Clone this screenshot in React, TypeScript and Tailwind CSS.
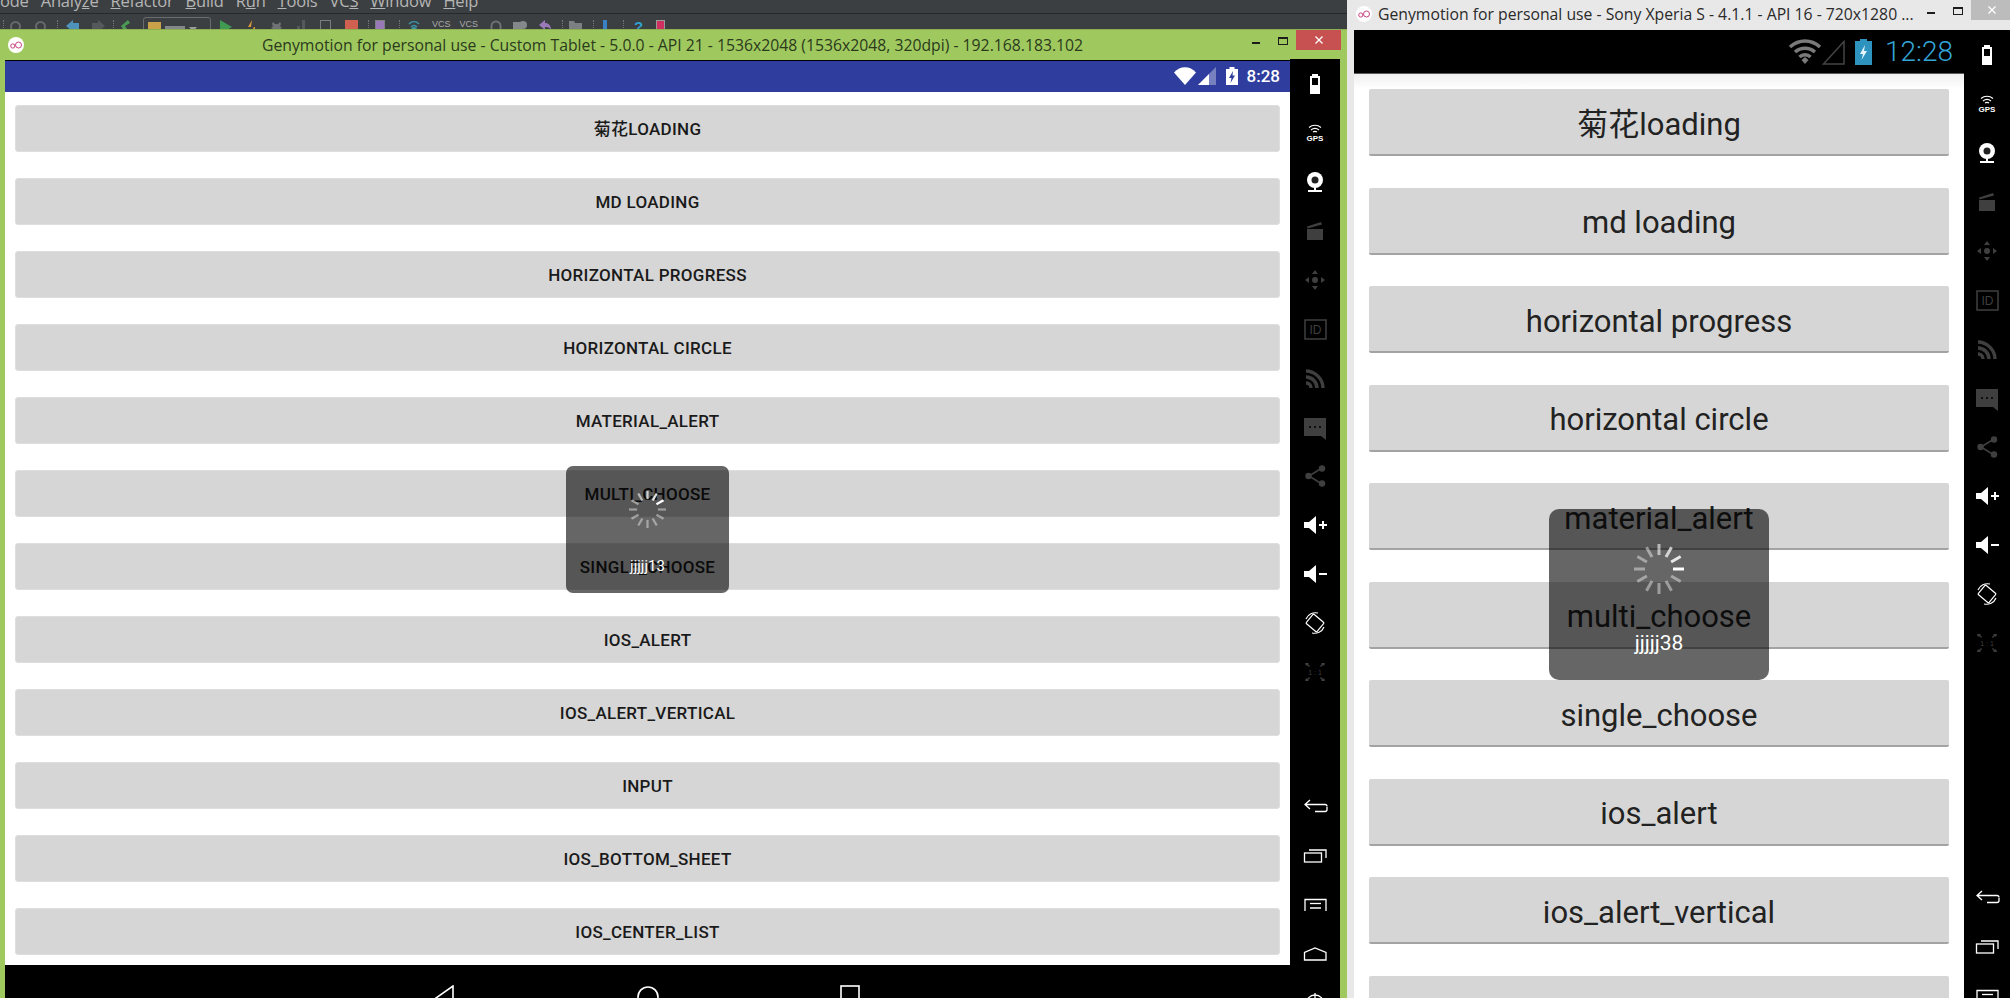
import type { ReactNode } from 'react';

const leftButtons = ['菊花LOADING', 'MD LOADING', 'HORIZONTAL PROGRESS', 'HORIZONTAL CIRCLE', 'MATERIAL_ALERT', 'MULTI_CHOOSE', 'SINGLE_CHOOSE', 'IOS_ALERT', 'IOS_ALERT_VERTICAL', 'INPUT', 'IOS_BOTTOM_SHEET', 'IOS_CENTER_LIST'];
const rightButtons = ['菊花loading', 'md loading', 'horizontal progress', 'horizontal circle', 'material_alert', 'multi_choose', 'single_choose', 'ios_alert', 'ios_alert_vertical', 'input'];

const menus: [string, string, string][] = [
  ['', '', 'ode'],
  ['Analy', 'z', 'e'],
  ['', 'R', 'efactor'],
  ['', 'B', 'uild'],
  ['R', 'u', 'n'],
  ['', 'T', 'ools'],
  ['VC', 'S', ''],
  ['', 'W', 'indow'],
  ['', 'H', 'elp'],
];

function GenyLogo() {
  return (
    <svg width="16" height="16" viewBox="0 0 16 16" className="shrink-0">
      <circle cx="8" cy="8" r="8" fill="#fff" />
      <circle cx="4.8" cy="9" r="2.1" fill="none" stroke="#c9457f" strokeWidth="1" />
      <circle cx="10.5" cy="8" r="3" fill="none" stroke="#c9457f" strokeWidth="1" />
    </svg>
  );
}

function Spinner({ size, head, width }: { size: number; head: number; width: number }) {
  const ticks = Array.from({ length: 12 }, (_, i) => i);
  return (
    <svg width={size} height={size} viewBox="-50 -50 100 100">
      {ticks.map((i) => (
        <line
          key={i}
          x1="0"
          y1="-50"
          x2="0"
          y2="-28"
          stroke="#fff"
          strokeWidth={width}
          opacity={Math.max(0.42, 1 - i * 0.14)}
          transform={`rotate(${head - i * 30})`}
        />
      ))}
    </svg>
  );
}

const dim = '#3f3f3f';

const sideIcons: ReactNode[] = [
  <svg key="battery" width="28" height="28" viewBox="0 0 28 28">
    <path d="M11 4h6v2h2v18H9V6h2z" fill="#fff" />
    <rect x="11" y="8" width="6" height="7" fill="#000" />
  </svg>,
  <svg key="gps" width="28" height="28" viewBox="0 0 28 28" fill="none" stroke="#fff">
    <path d="M8 8.5c3.500-3 8.500-3 12 0M10 11c2.500-2 5.500-2 8 0M12 13c1.200-.8 2.800-.8 4 0" strokeWidth="1.100" />
    <text x="14" y="22" textAnchor="middle" fill="#fff" stroke="none" fontSize="8" fontWeight="700" fontFamily="'Liberation Sans', sans-serif">GPS</text>
  </svg>,
  <svg key="cam" width="28" height="28" viewBox="0 0 28 28">
    <circle cx="14" cy="12" r="8" fill="#fff" />
    <circle cx="14" cy="12" r="3.500" fill="#222" />
    <rect x="7" y="22" width="14" height="2" fill="#fff" />
    <rect x="13" y="19" width="2" height="4" fill="#fff" />
  </svg>,
  <svg key="clap" width="28" height="28" viewBox="0 0 28 28" fill={dim}>
    <path d="M6 12h16v11H6z" />
    <path d="M6 9.500 20 5l1 2.500L6.500 11.500z" />
  </svg>,
  <svg key="pad" width="28" height="28" viewBox="0 0 28 28" fill={dim}>
    <circle cx="14" cy="14" r="3" />
    <path d="M14 4l3 4h-6zM14 24l3-4h-6zM4 14l4-3v6zM24 14l-4-3v6z" />
  </svg>,
  <svg key="id" width="28" height="28" viewBox="0 0 28 28">
    <rect x="4" y="5" width="21" height="19" fill="none" stroke={dim} strokeWidth="1.500" />
    <text x="14.500" y="19" textAnchor="middle" fill={dim} fontSize="12" fontFamily="'Liberation Sans', sans-serif">ID</text>
  </svg>,
  <svg key="rss" width="28" height="28" viewBox="0 0 28 28" fill="none" stroke={dim} strokeWidth="3.500">
    <path d="M5 7c9 0 17 8 17 17M5 13c6 0 11 5 11 11M5 19c3 0 5 2 5 5" />
  </svg>,
  <svg key="msg" width="28" height="28" viewBox="0 0 28 28">
    <path d="M3 5h22v22l-5-4H3z" fill={dim} />
    <circle cx="9" cy="14" r="1" fill="#000" />
    <circle cx="14" cy="14" r="1" fill="#000" />
    <circle cx="19" cy="14" r="1" fill="#000" />
  </svg>,
  <svg key="share" width="28" height="28" viewBox="0 0 28 28" fill={dim}>
    <path d="M8 14 21 6M8 14l13 8" stroke={dim} strokeWidth="1.500" />
    <circle cx="7.500" cy="14" r="3.200" />
    <circle cx="21" cy="6.500" r="3.200" />
    <circle cx="21" cy="21.500" r="3.200" />
  </svg>,
  <svg key="volup" width="28" height="28" viewBox="0 0 28 28" fill="#fff">
    <path d="M3 11h5l7-6v18l-7-6H3z" />
    <path d="M18 13h3V10h2v3h3v2h-3v3h-2v-3h-3z" />
  </svg>,
  <svg key="voldown" width="28" height="28" viewBox="0 0 28 28" fill="#fff">
    <path d="M3 11h5l7-6v18l-7-6H3z" />
    <rect x="18" y="13" width="8" height="2" />
  </svg>,
  <svg key="rotate" width="28" height="28" viewBox="0 0 28 28" fill="none" stroke="#fff" strokeWidth="1.200">
    <rect x="7" y="8" width="14" height="12" rx="1" transform="rotate(40 14 14)" />
    <path d="M5 10C7 5 12 3 17 4M23 18c-2 5-7 7-12 6" />
  </svg>,
  <svg key="ratio" width="28" height="28" viewBox="0 0 28 28" fill={dim}>
    <path d="M4 5h4l-1 1 2 2-1 1-2-2-1 1zM24 5h-4l1 1-2 2 1 1 2-2 1 1zM4 23h4l-1-1 2-2-1-1-2 2-1-1zM24 23h-4l1-1-2-2 1-1 2 2 1-1z" />
    <text x="14" y="17" textAnchor="middle" fontSize="7" fontFamily="'Liberation Sans', sans-serif">1 : 1</text>
  </svg>,
];

const navIcons: ReactNode[] = [
  <svg key="back" width="28" height="28" viewBox="0 0 28 28" fill="none" stroke="#fff" strokeWidth="1.300">
    <path d="M26 14v2.500q0 2-2 2H14M4 11.500h20q2 0 2 2M9 7l-5 4.500L9 16" />
  </svg>,
  <svg key="recent" width="28" height="28" viewBox="0 0 28 28" fill="none" stroke="#fff" strokeWidth="1.300">
    <rect x="3.500" y="11" width="17" height="9" />
    <path d="M8 8h17v8" />
  </svg>,
  <svg key="menu" width="28" height="28" viewBox="0 0 28 28" fill="none" stroke="#fff" strokeWidth="1.300">
    <path d="M4 20V8.500h21V20" />
    <path d="M9 12.500h11" />
    <path d="M9 17h11" stroke="#bdbdbd" strokeWidth="2" />
  </svg>,
  <svg key="home" width="28" height="28" viewBox="0 0 28 28" fill="none" stroke="#fff" strokeWidth="1.300">
    <path d="M3.500 20v-7.500L14 8l11 4.500V20z" />
  </svg>,
  <svg key="power" width="28" height="28" viewBox="0 0 28 28" fill="none" stroke="#fff" strokeWidth="1.300">
    <circle cx="14" cy="15" r="9" />
    <path d="M14 4v12" />
  </svg>,
];

function Sidebar({ gap }: { gap: string }) {
  return (
    <div className="w-full h-full bg-black flex flex-col items-center overflow-hidden">
      {sideIcons.map((icon, i) => (
        <div key={i} className="h-[49px] w-full shrink-0 flex items-center justify-center">{icon}</div>
      ))}
      <div className={`w-full flex flex-col shrink-0 ${gap}`}>
        {navIcons.map((icon, i) => (
          <div key={i} className="h-[49px] w-full shrink-0 flex items-center justify-center">{icon}</div>
        ))}
      </div>
    </div>
  );
}

function Sep({ className }: { className: string }) {
  return <div className={`shrink-0 w-px h-[12px] border-l border-dotted border-[#777] ${className}`} />;
}

function Tiny({ w, className, children }: { w: number; className: string; children: ReactNode }) {
  return (
    <svg width={w} height="14" viewBox={`0 0 ${w} 14`} className={`shrink-0 ${className}`}>
      {children}
    </svg>
  );
}

function IdeStrip() {
  return (
    <div className="h-[29px] bg-[#3c3f41] overflow-hidden shrink-0">
      <div className="h-[13px] overflow-hidden flex gap-[12px] text-[16.500px] leading-[16px] text-[#b5b5b5] font-['Open_Sans',sans-serif] -tracking-[0.2px]">
        {menus.map(([a, u, b], i) => (
          <span key={i} className="relative -top-[7px] whitespace-nowrap">
            {a}<span className="underline">{u}</span>{b}
          </span>
        ))}
      </div>
      <div className="h-px bg-[#26282a]" />
      <div className="h-[15px] pt-[6px] overflow-hidden flex items-start">
        <Sep className="ml-[3px]" />
        <Tiny w={11} className="ml-[6px]"><circle cx="5.500" cy="6.500" r="4.500" fill="none" stroke="#67696b" strokeWidth="2" /></Tiny>
        <Tiny w={11} className="ml-[14px]"><circle cx="5.500" cy="6.500" r="4.500" fill="none" stroke="#67696b" strokeWidth="2" /></Tiny>
        <Sep className="ml-[11px]" />
        <Tiny w={13} className="ml-[8px]"><path d="M0 6 7 0v3h6v6H7v3z" fill="#4f93bd" /></Tiny>
        <Tiny w={13} className="ml-[13px]"><path d="M13 6 6 0v3H0v6h6v3z" fill="#56595b" /></Tiny>
        <Sep className="ml-[8px]" />
        <Tiny w={10} className="ml-[7px]"><path d="M7 0 0 6l4 6h4L4 6l5-3z" fill="#4b9a55" /></Tiny>
        <div className="ml-[12px] w-[68px] h-[14px] -mt-[3px] shrink-0 border border-[#6a6d6f] rounded-t-[3px] flex items-start gap-[4px] pl-[4px] pt-[4px]">
          <div className="w-[13px] h-[10px] bg-[#c9a24a]" />
          <div className="w-[20px] h-[6px] mt-[4px] bg-[#85888a]" />
          <div className="w-0 h-0 mt-[5px] border-x-[4px] border-x-transparent border-t-[5px] border-t-[#9a9a9a]" />
        </div>
        <Tiny w={12} className="ml-[9px]"><path d="M0 0l12 7-12 7z" fill="#3f9a52" /></Tiny>
        <Tiny w={10} className="ml-[14px]"><path d="M6 0 2 7h6l-4 7h5V7H5z" fill="#d8963c" /></Tiny>
        <Tiny w={13} className="ml-[14px]"><path d="M3 2l2 2h3l2-2 1 2-1 2 2 2-2 1v3H3V9L1 8l2-2-1-2z" fill="#6f7274" /></Tiny>
        <Tiny w={11} className="ml-[12px]"><path d="M7 0h3v14H7zM2 6h3v8H2z" fill="#56595b" /></Tiny>
        <Tiny w={11} className="ml-[14px]"><rect x=".5" y=".5" width="10" height="12" fill="none" stroke="#7a7d7f" /></Tiny>
        <Tiny w={13} className="ml-[14px]"><rect width="13" height="14" fill="#d0604f" /></Tiny>
        <Sep className="ml-[10px]" />
        <Tiny w={10} className="ml-[6px]"><rect x=".5" y=".5" width="9" height="13" fill="#9a79b8" stroke="#808080" /></Tiny>
        <Sep className="ml-[14px]" />
        <Tiny w={12} className="ml-[8px]"><path d="M1 4c3-3 7-3 10 0M3 7c2-2 4-2 6 0" fill="none" stroke="#3d95a8" strokeWidth="1.500" /><circle cx="6" cy="10" r="3" fill="#3d95a8" /></Tiny>
        <div className="ml-[12px] text-[9px] leading-[9px] text-[#aaa] font-['Liberation_Sans',sans-serif]">VCS</div>
        <div className="ml-[9px] text-[9px] leading-[9px] text-[#aaa] font-['Liberation_Sans',sans-serif]">VCS</div>
        <Tiny w={12} className="ml-[12px]"><path d="M1.500 9V6a4.500 4.500 0 0 1 9 0v3" fill="none" stroke="#6f7274" strokeWidth="2" /></Tiny>
        <Tiny w={14} className="ml-[11px]"><path d="M0 2h9v11H0z" fill="#85888a" /><circle cx="10" cy="5" r="4" fill="#85888a" /></Tiny>
        <Tiny w={12} className="ml-[12px]"><path d="M0 5 6 0v3c4 0 6 3 6 7-1-2-3-3-6-3v3z" fill="#9a79b8" /></Tiny>
        <Sep className="ml-[11px]" />
        <Tiny w={13} className="ml-[6px]"><path d="M0 1h5l1 2h7v11H0z" fill="#7d8082" /></Tiny>
        <Sep className="ml-[11px]" />
        <Tiny w={4} className="ml-[9px]"><rect width="4" height="14" fill="#3b82c4" /></Tiny>
        <Sep className="ml-[16px]" />
        <div className="ml-[10px] text-[15px] leading-[13px] font-bold text-[#2f9fd0] font-['Liberation_Sans',sans-serif]">?</div>
        <Tiny w={9} className="ml-[13px]"><rect x=".5" y=".5" width="8" height="13" fill="#d03060" stroke="#999" /></Tiny>
      </div>
    </div>
  );
}

function WinButtons({ close }: { close: string }) {
  return (
    <>
      <div className="w-[8px] h-[2px] bg-[#1c1c1c] mt-[12px]" />
      <div className="ml-[18px] w-[10px] h-[8px] border border-t-2 border-[#1c1c1c] mt-[7px]" />
      <div className={`ml-[8px] h-[20px] flex items-center justify-center ${close}`}>
        <svg width="8" height="8" viewBox="0 0 8 8" stroke="#fff" strokeWidth="1.300"><path d="M.5.5l7 7M7.500.5l-7 7" /></svg>
      </div>
    </>
  );
}

function BarIcons({ fg }: { fg: string }) {
  return (
    <div className="flex items-start pt-[6px] h-full">
      <svg width="22" height="18" viewBox="0 0 22 18"><path d="M0 5.500C6-1.500 16-1.500 22 5.500L11 18z" fill={fg} /></svg>
      <svg width="18" height="18" viewBox="0 0 18 18" className="ml-[2px]">
        <path d="M0 18 18 0v18z" fill={fg} opacity=".35" />
        <path d="M0 18 11 7v11z" fill={fg} />
      </svg>
      <svg width="12" height="18" viewBox="0 0 12 18" className="ml-[10px]">
        <path d="M3.500 0h5v2H12v16H0V2h3.500z" fill={fg} />
        <path d="M7 4 3 11h2.500L4.500 16 9 8.500H6.500z" fill="#2f3e9e" />
      </svg>
    </div>
  );
}

export default function App() {
  return (
    <div className="w-[2010px] h-[998px] flex overflow-hidden bg-black font-['Roboto','Noto_Sans_CJK_SC',sans-serif]">
      {/* Custom tablet window */}
      <div className="w-[1347px] h-full shrink-0 flex flex-col">
        <IdeStrip />
        <div className="h-[969px] bg-[#9fc95f] border-t border-[#8bb04f] flex flex-col">
          <div className="h-[30px] shrink-0 relative flex">
            <div className="pl-[8px] pt-[7px]"><GenyLogo /></div>
            <div className="flex-1 pl-[238px] pt-[5px] text-[15.750px] leading-[20px] text-[#2b3a1c] whitespace-nowrap font-['Open_Sans',sans-serif]">
              Genymotion for personal use - Custom Tablet - 5.0.0 - API 21 - 1536x2048 (1536x2048, 320dpi) - 192.168.183.102
            </div>
            <div className="flex pr-[6px]"><WinButtons close="w-[45px] bg-[#c75050]" /></div>
          </div>
          <div className="flex-1 min-h-0 flex pl-[5px] pr-[7px]">
            <div className="w-[1285px] shrink-0 flex flex-col border-t border-black">
              <div className="h-[31px] shrink-0 bg-[#2f3e9e] flex justify-end pr-[10px]">
                <BarIcons fg="#fff" />
                <span className="ml-[9px] mt-[5px] text-[17px] leading-[20px] font-medium text-white">8:28</span>
              </div>
              <div className="h-[873px] shrink-0 bg-white relative overflow-hidden pl-[10px] pr-[10px] pt-[13px] flex flex-col gap-[26px]">
                {leftButtons.map((label) => (
                  <div key={label} className="h-[47px] shrink-0 pt-[3px] rounded-[3px] bg-[#d6d6d6] border border-[#dedede] flex items-center justify-center text-[17px] tracking-[0.3px] font-medium text-[#1a1a1a]">
                    {label}
                  </div>
                ))}
                <div className="absolute left-[561px] top-[374px] w-[163px] h-[127px] rounded-[7px] bg-black/60 flex flex-col items-center text-white">
                  <div className="mt-[25px]"><Spinner size={37} head={60} width={6} /></div>
                  <span className="mt-[28px] text-[15px] leading-[20px]">jjjjj13</span>
                </div>
              </div>
              <div className="flex-1 bg-black flex pt-[20px] overflow-hidden">
                <svg width="21" height="26" viewBox="0 0 21 26" fill="none" stroke="#fff" strokeWidth="1.600" className="ml-[429px] shrink-0"><path d="M19 1v24L2 13z" /></svg>
                <svg width="22" height="26" viewBox="0 0 22 26" fill="none" stroke="#fff" strokeWidth="1.600" className="ml-[182px] shrink-0"><circle cx="11" cy="12" r="10" /></svg>
                <svg width="22" height="26" viewBox="0 0 22 26" fill="none" stroke="#fff" strokeWidth="1.600" className="ml-[180px] shrink-0"><rect x="2" y="1" width="18" height="24" /></svg>
              </div>
            </div>
            <div className="w-[50px] shrink-0 -mt-px"><Sidebar gap="mt-[86px]" /></div>
          </div>
        </div>
      </div>

      {/* Xperia window */}
      <div className="flex-1 min-w-0 h-full flex flex-col bg-[#e8e8e8]">
        <div className="h-[30px] shrink-0 flex">
          <div className="pl-[9px] pt-[6px]"><GenyLogo /></div>
          <div className="flex-1 min-w-0 pl-[6px] pt-[4px] text-[15.750px] leading-[20px] text-[#2a2a2a] whitespace-nowrap font-['Open_Sans',sans-serif]">
            Genymotion for personal use - Sony Xperia S - 4.1.1 - API 16 - 720x1280 ...
          </div>
          <div className="w-[84px] shrink-0 flex">
            <div className="ml-[1px] flex"><WinButtons close="w-[41px] bg-[#bcbcbc]" /></div>
          </div>
        </div>
        <div className="flex-1 min-h-0 flex pl-[7px]">
          <div className="w-[610px] shrink-0 flex flex-col">
            <div className="h-[44px] shrink-0 bg-black border-b border-[#5a5a5a] flex justify-end pr-[11px]">
              <svg width="34" height="26" viewBox="0 0 34 26" className="mt-[9px]" fill="none" stroke="#7a7a7a" strokeWidth="3.500">
                <path d="M2 8c9-8 21-8 30 0M7 13c6-5 14-5 20 0M11.500 18c3-3 8-3 11 0" />
                <path d="M13.500 21l3.500-3 3.500 3-3.500 4z" fill="#7a7a7a" stroke="none" />
              </svg>
              <svg width="23" height="25" viewBox="0 0 23 25" className="mt-[10px]" fill="none" stroke="#444" strokeWidth="1.500"><path d="M1.500 24 22 1.500V24z" /></svg>
              <svg width="17" height="26" viewBox="0 0 17 26" className="ml-[10px] mt-[9px]">
                <path d="M5 0h7v2h5v24H0V2h5z" fill="#2f93c0" />
                <path d="M10 6 5 15h3l-1.500 6L12 12H9z" fill="#e8f6fc" />
              </svg>
              <span className="ml-[13px] mt-[5px] text-[28px] leading-[34px] font-light text-[#33a5d5]">12:28</span>
            </div>
            <div className="flex-1 min-h-0 overflow-hidden bg-white">
              <div className="h-[15px] bg-gradient-to-b from-[#efefef] to-white" />
              <div className="relative pl-[15px] pr-[15px] flex flex-col gap-[31.500px]">
                {rightButtons.map((label) => (
                  <div key={label} className="h-[67px] shrink-0 pt-[7px] rounded-[2px] bg-[#d6d6d6] border-b-2 border-[#a3a3a3] flex items-center justify-center text-[31px] text-[#222]">
                    {label}
                  </div>
                ))}
                <div className="absolute left-[195px] top-[420px] w-[220px] h-[171px] rounded-[10px] bg-black/60 flex flex-col items-center text-white">
                  <div className="mt-[35px]"><Spinner size={50} head={90} width={6} /></div>
                  <span className="mt-[37px] text-[21px] leading-[24px]">jjjjj38</span>
                </div>
              </div>
            </div>
          </div>
          <div className="w-[46px] shrink-0"><Sidebar gap="mt-[206px]" /></div>
        </div>
      </div>
    </div>
  );
}
